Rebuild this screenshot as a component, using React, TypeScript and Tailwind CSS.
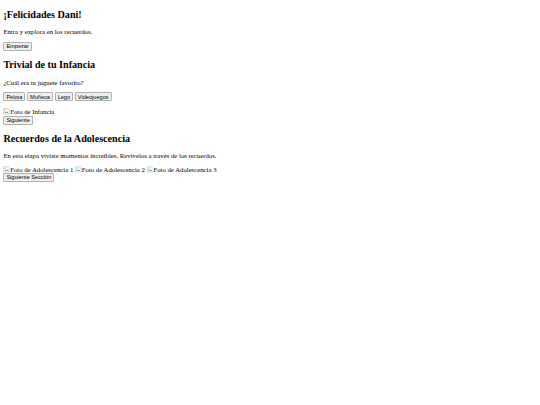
import React from "react";

function BrokenImg({ alt }: { alt: string }) {
  return (
    <span className="inline-flex items-end">
      <svg width="6.75" height="6.75" viewBox="0 0 16 16" className="self-center">
        <path d="M1.5 1.5h10l3 3v10h-13z" fill="#fff" stroke="#9aa0a6" strokeWidth="1" />
        <path d="M3 12l3-4 2 2.5 2-3 3 4.5z" fill="#5bb974" />
        <circle cx="5" cy="5" r="1.3" fill="#4f8fe0" />
      </svg>
      <span>{alt}</span>
    </span>
  );
}

function Btn({ children }: { children: React.ReactNode }) {
  return (
    <button className="font-['Liberation_Sans',Arial,sans-serif] text-[5.625px] leading-[normal] px-[2px] py-[0.42px] border border-solid border-[#b0b0b0] bg-[#efefef] text-black rounded-[1px]">
      {children}
    </button>
  );
}

export default function App() {
  return (
    <div className="min-h-[405px] bg-white text-black font-['Liberation_Serif','Times_New_Roman',serif] text-[6.75px] leading-[normal] px-[3.375px] pt-[8.8px]">
      <div>
        <h2 className="text-[10.125px] font-bold leading-[normal] mb-[8.4px]">¡Felicidades Dani!</h2>
        <p className="my-[6.75px]">Entra y explora en los recuerdos.</p>
        <div><Btn>Empezar</Btn></div>
      </div>
      <div>
        <h2 className="text-[10.125px] font-bold leading-[normal] my-[8.4px]">Trivial de tu Infancia</h2>
        <p className="my-[6.75px]">¿Cuál era tu juguete favorito?</p>
        <div className="flex gap-[1.7px]">
          <Btn>Pelota</Btn>
          <Btn>Muñeca</Btn>
          <Btn>Lego</Btn>
          <Btn>Videojuegos</Btn>
        </div>
        <div className="mt-[6.75px]"><BrokenImg alt="Foto de Infancia" /></div>
        <div><Btn>Siguiente</Btn></div>
      </div>
      <div>
        <h2 className="text-[10.125px] font-bold leading-[normal] my-[8.4px]">Recuerdos de la Adolescencia</h2>
        <p className="my-[6.75px]">En esta etapa viviste momentos increíbles. Revívelos a través de los recuerdos.</p>
        <div className="flex gap-[1.7px]">
          <BrokenImg alt="Foto de Adolescencia 1" />
          <BrokenImg alt="Foto de Adolescencia 2" />
          <BrokenImg alt="Foto de Adolescencia 3" />
        </div>
        <div><Btn>Siguiente Sección</Btn></div>
      </div>
    </div>
  );
}
